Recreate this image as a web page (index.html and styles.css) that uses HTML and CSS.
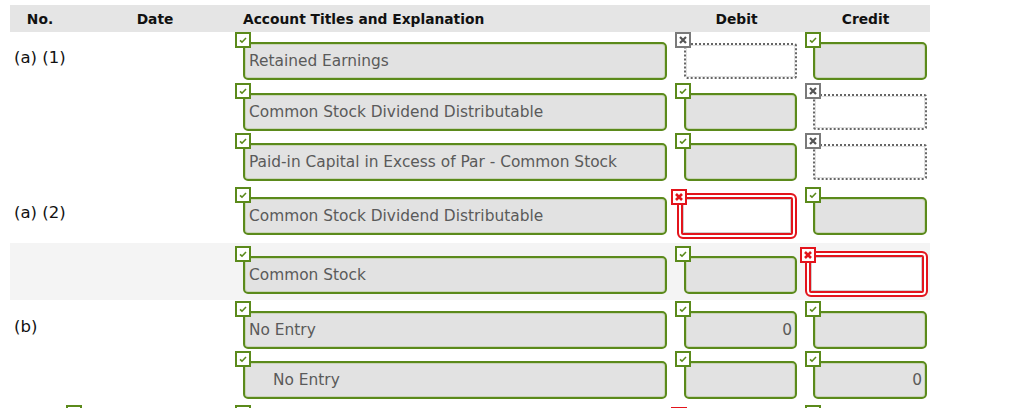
FILE: index.html
```html
<!DOCTYPE html>
<html lang="en">
<head>
    <title>Journal Entry</title>
    <meta charset="utf-8">
    <link rel="stylesheet" href="styles.css">
</head>
<body>
<div class="sheet">
    <div class="head">
        <div class="h-no">No.</div>
        <div class="h-date">Date</div>
        <div class="h-acct">Account Titles and Explanation</div>
        <div class="h-debit">Debit</div>
        <div class="h-credit">Credit</div>
    </div>

    <!-- (a) (1) -->
    <div class="line first">
        <div class="label">(a) (1)</div>
        <div class="cell c-acct">
            <span class="mark ok"><svg viewBox="0 0 12 12"><path d="M3 6.3 L5 8.2 L9 4"/></svg></span>
            <div class="field">Retained Earnings</div>
        </div>
        <div class="cell c-debit">
            <span class="mark none"><svg viewBox="0 0 12 12"><path d="M3 3 L9 9 M9 3 L3 9"/></svg></span>
            <div class="field open"></div>
        </div>
        <div class="cell c-credit">
            <span class="mark ok"><svg viewBox="0 0 12 12"><path d="M3 6.3 L5 8.2 L9 4"/></svg></span>
            <div class="field num"></div>
        </div>
    </div>
    <div class="line">
        <div class="label"></div>
        <div class="cell c-acct">
            <span class="mark ok"><svg viewBox="0 0 12 12"><path d="M3 6.3 L5 8.2 L9 4"/></svg></span>
            <div class="field">Common Stock Dividend Distributable</div>
        </div>
        <div class="cell c-debit">
            <span class="mark ok"><svg viewBox="0 0 12 12"><path d="M3 6.3 L5 8.2 L9 4"/></svg></span>
            <div class="field num"></div>
        </div>
        <div class="cell c-credit">
            <span class="mark none"><svg viewBox="0 0 12 12"><path d="M3 3 L9 9 M9 3 L3 9"/></svg></span>
            <div class="field open"></div>
        </div>
    </div>
    <div class="line tight">
        <div class="label"></div>
        <div class="cell c-acct">
            <span class="mark ok"><svg viewBox="0 0 12 12"><path d="M3 6.3 L5 8.2 L9 4"/></svg></span>
            <div class="field">Paid-in Capital in Excess of Par - Common Stock</div>
        </div>
        <div class="cell c-debit">
            <span class="mark ok"><svg viewBox="0 0 12 12"><path d="M3 6.3 L5 8.2 L9 4"/></svg></span>
            <div class="field num"></div>
        </div>
        <div class="cell c-credit">
            <span class="mark none"><svg viewBox="0 0 12 12"><path d="M3 3 L9 9 M9 3 L3 9"/></svg></span>
            <div class="field open"></div>
        </div>
    </div>

    <!-- (a) (2) -->
    <div class="line group">
        <div class="label">(a) (2)</div>
        <div class="cell c-acct">
            <span class="mark ok"><svg viewBox="0 0 12 12"><path d="M3 6.3 L5 8.2 L9 4"/></svg></span>
            <div class="field">Common Stock Dividend Distributable</div>
        </div>
        <div class="cell c-debit">
            <span class="mark bad"><svg viewBox="0 0 12 12"><path d="M3 3 L9 9 M9 3 L3 9"/></svg></span>
            <div class="field wrong"></div>
        </div>
        <div class="cell c-credit">
            <span class="mark ok"><svg viewBox="0 0 12 12"><path d="M3 6.3 L5 8.2 L9 4"/></svg></span>
            <div class="field num"></div>
        </div>
    </div>
    <div class="band">
        <div class="line">
            <div class="label"></div>
            <div class="cell c-acct">
                <span class="mark ok"><svg viewBox="0 0 12 12"><path d="M3 6.3 L5 8.2 L9 4"/></svg></span>
                <div class="field">Common Stock</div>
            </div>
            <div class="cell c-debit">
                <span class="mark ok"><svg viewBox="0 0 12 12"><path d="M3 6.3 L5 8.2 L9 4"/></svg></span>
                <div class="field num"></div>
            </div>
            <div class="cell c-credit">
                <span class="mark bad"><svg viewBox="0 0 12 12"><path d="M3 3 L9 9 M9 3 L3 9"/></svg></span>
                <div class="field wrong"></div>
            </div>
        </div>
    </div>

    <!-- (b) -->
    <div class="line after-band">
        <div class="label">(b)</div>
        <div class="cell c-acct">
            <span class="mark ok"><svg viewBox="0 0 12 12"><path d="M3 6.3 L5 8.2 L9 4"/></svg></span>
            <div class="field">No Entry</div>
        </div>
        <div class="cell c-debit">
            <span class="mark ok"><svg viewBox="0 0 12 12"><path d="M3 6.3 L5 8.2 L9 4"/></svg></span>
            <div class="field num">0</div>
        </div>
        <div class="cell c-credit">
            <span class="mark ok"><svg viewBox="0 0 12 12"><path d="M3 6.3 L5 8.2 L9 4"/></svg></span>
            <div class="field num"></div>
        </div>
    </div>
    <div class="line tight">
        <div class="label"></div>
        <div class="cell c-acct">
            <span class="mark ok"><svg viewBox="0 0 12 12"><path d="M3 6.3 L5 8.2 L9 4"/></svg></span>
            <div class="field indent">No Entry</div>
        </div>
        <div class="cell c-debit">
            <span class="mark ok"><svg viewBox="0 0 12 12"><path d="M3 6.3 L5 8.2 L9 4"/></svg></span>
            <div class="field num"></div>
        </div>
        <div class="cell c-credit">
            <span class="mark ok"><svg viewBox="0 0 12 12"><path d="M3 6.3 L5 8.2 L9 4"/></svg></span>
            <div class="field num">0</div>
        </div>
    </div>

    <!-- next entry, cut off by the window -->
    <div class="line group">
        <div class="cell c-no"></div>
        <div class="cell c-date">
            <span class="mark ok"><svg viewBox="0 0 12 12"><path d="M3 6.3 L5 8.2 L9 4"/></svg></span>
            <div class="field"></div>
        </div>
        <div class="cell c-acct">
            <span class="mark ok"><svg viewBox="0 0 12 12"><path d="M3 6.3 L5 8.2 L9 4"/></svg></span>
            <div class="field"></div>
        </div>
        <div class="cell c-debit">
            <span class="mark bad"><svg viewBox="0 0 12 12"><path d="M3 3 L9 9 M9 3 L3 9"/></svg></span>
            <div class="field wrong"></div>
        </div>
        <div class="cell c-credit">
            <span class="mark ok"><svg viewBox="0 0 12 12"><path d="M3 6.3 L5 8.2 L9 4"/></svg></span>
            <div class="field num"></div>
        </div>
    </div>
</div>
</body>
</html>
```

FILE: styles.css
```css
html, body {
    margin: 0;
    height: 408px;
    overflow: hidden;
    background: #fff;
    font-family: "DejaVu Sans", Verdana, sans-serif;
}

.sheet {
    margin: 5px 0 0 10px;
    width: 920px;
}

.head {
    display: grid;
    grid-template-columns: 56px 169px 440px 130px 125px;
    height: 27px;
    line-height: 28px;
    background-color: #e5e5e5;
    font-size: 13.8px;
    font-weight: bold;
    color: #111;
}

.h-no, .h-date, .h-debit, .h-credit {
    text-align: center;
}

.h-no {
    padding-left: 4px;
}

.h-date {
    padding-left: 9px;
}

.h-acct {
    padding-left: 8px;
}

.h-debit {
    padding-right: 7px;
}

.h-credit {
    padding-right: 4px;
}

.line {
    display: grid;
    grid-template-columns: 56px 169px 440px 130px 125px;
    height: 48px;
    margin-top: 3px;
}

.line.first {
    margin-top: 0;
}

.line.tight {
    margin-top: 2px;
}

.line.group {
    margin-top: 6px;
}

.line.after-band {
    margin-top: 1px;
}

.band {
    margin-top: 8px;
    padding: 3px 0 6px;
    background-color: #f4f4f4;
}

.band .line {
    margin-top: 0;
}

.label {
    grid-column: span 2;
    padding: 16px 0 0 4px;
    font-size: 16.5px;
    line-height: 20px;
    color: #111;
    white-space: nowrap;
}

.cell {
    position: relative;
}

.mark {
    position: absolute;
    left: 0;
    top: 0;
    z-index: 1;
    width: 16px;
    height: 16px;
    box-sizing: border-box;
    border: 2px solid #5b8a1b;
    background: #fff;
}

.mark svg {
    display: block;
    width: 12px;
    height: 12px;
    fill: none;
    stroke: #5b8a1b;
    stroke-width: 1.6;
}

.mark.none {
    border-color: #7a7a7a;
}

.mark.none svg {
    stroke: #555;
    stroke-width: 2.2;
}

.mark.bad {
    left: -4px;
    top: 2px;
    border-color: #e3141c;
}

.mark.bad svg {
    stroke: #e3141c;
    stroke-width: 2.6;
}

.c-credit .mark.bad {
    left: -5px;
    top: 1px;
}

.field {
    box-sizing: border-box;
    height: 38px;
    margin: 10px 0 0 8px;
    padding: 0 4px;
    border: 2px solid #5b8a1b;
    border-radius: 5px;
    background-color: #e2e2e2;
    box-shadow: inset 0 0 0 1px #c9d4b8;
    font-size: 15.4px;
    line-height: 34px;
    color: #5a5a5a;
    white-space: nowrap;
    overflow: hidden;
}

.c-acct .field {
    width: 424px;
}

.c-debit .field {
    width: 113px;
    margin-left: 9px;
}

.c-credit .field {
    width: 114px;
}

.c-date .field {
    width: 160px;
}

.field.num {
    text-align: right;
    padding-right: 3px;
}

.field.indent {
    padding-left: 28px;
}

.field.open {
    height: 36px;
    margin-top: 11px;
    border: 2px dotted #666;
    border-radius: 3px;
    background-color: #fff;
    box-shadow: inset 0 0 0 1px #e0e0e0;
}

.field.wrong {
    height: 46px;
    width: 120px;
    margin: 6px 0 0 2px;
    border: 2px solid #e3141c;
    border-radius: 6px;
    background-color: #fff;
    box-shadow: inset 0 0 0 2px #fff, inset 0 0 0 4px #e3141c, inset 0 0 0 5px #cfcfcf;
}

.c-credit .field.wrong {
    width: 123px;
    margin: 5px 0 0 0;
}
```
